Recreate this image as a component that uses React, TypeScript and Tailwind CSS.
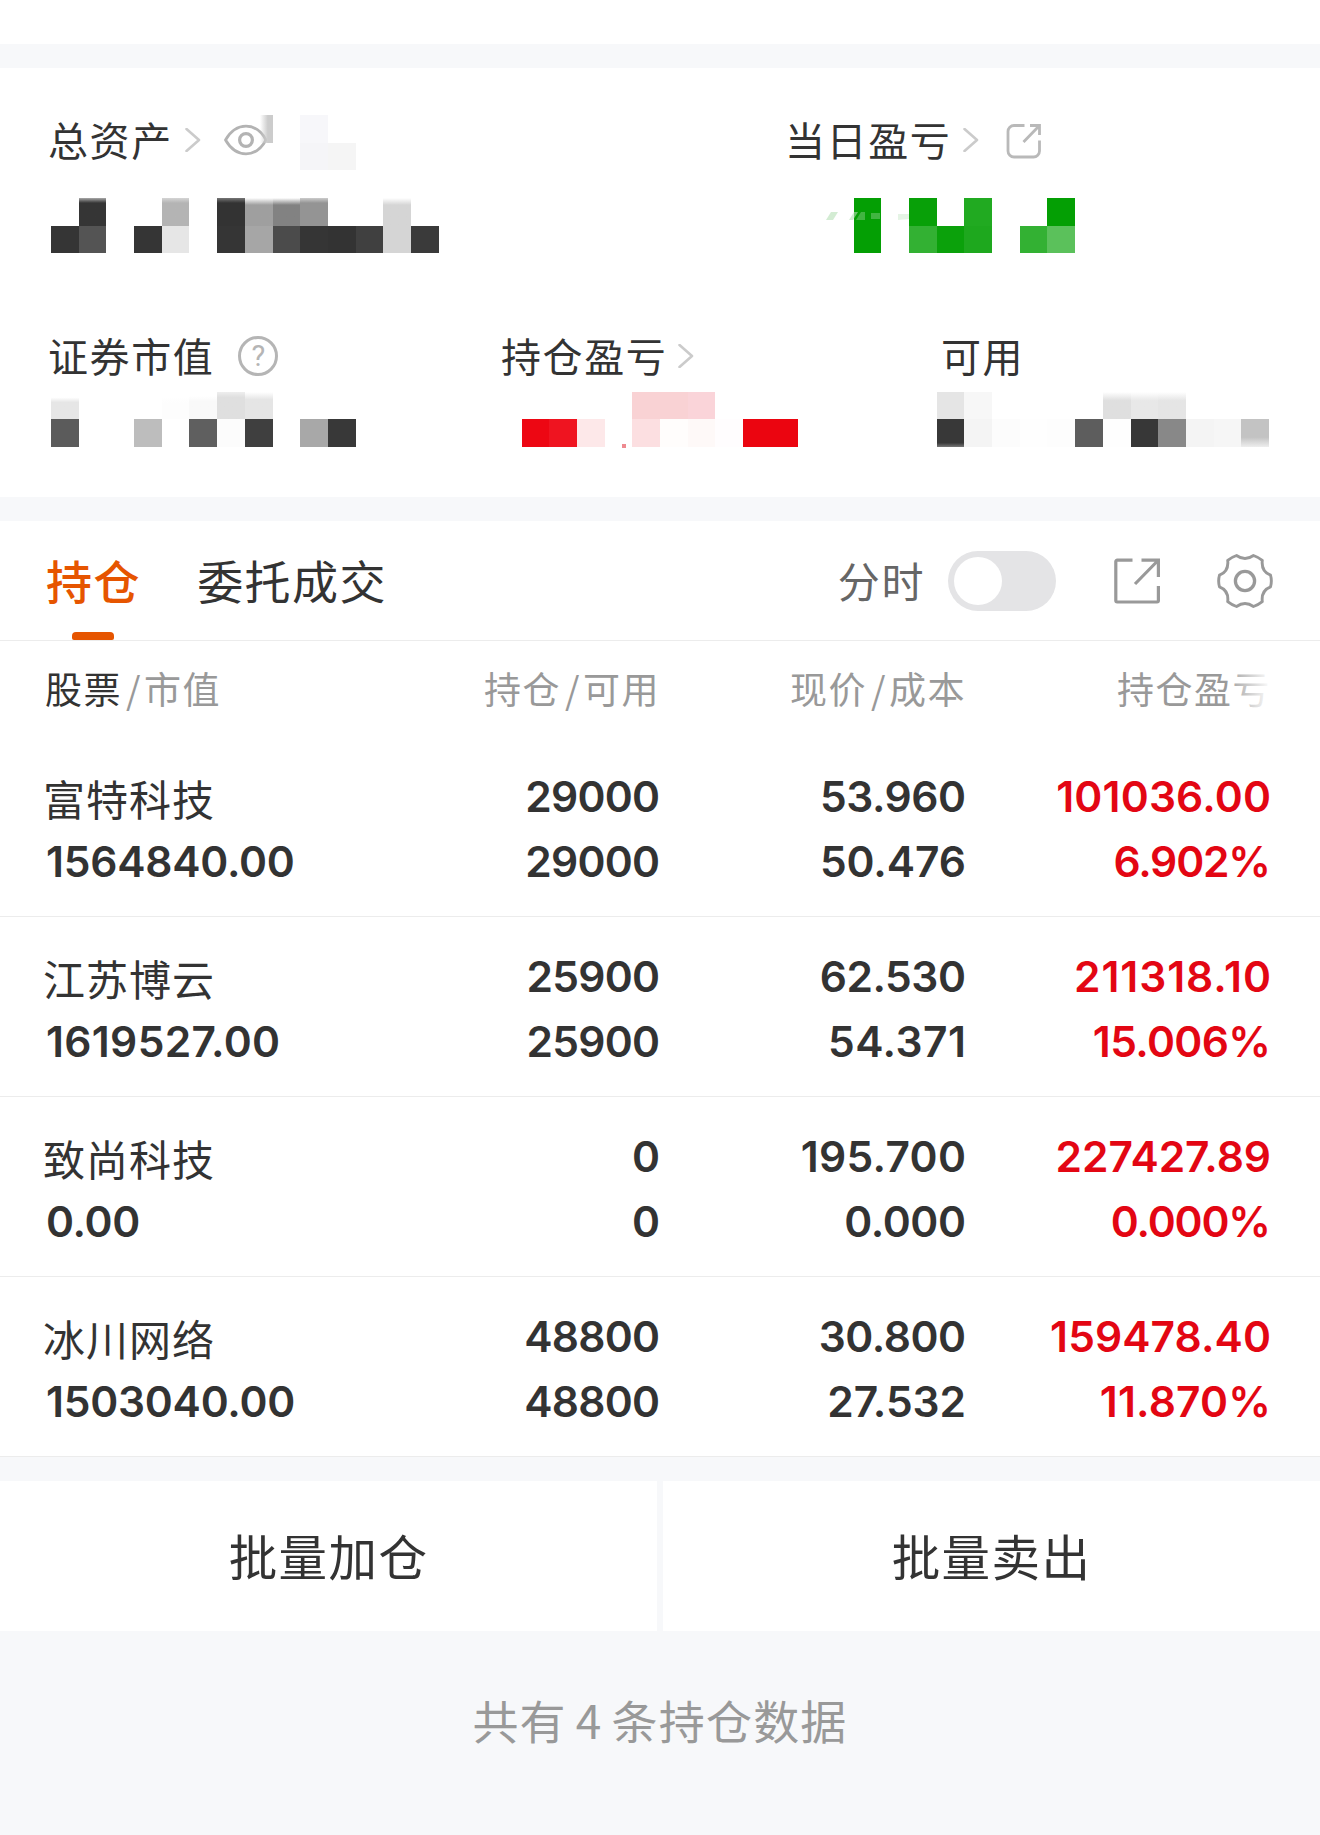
import clsx from "clsx";

const CELL = "h-full w-[27.7px] shrink-0";

function Mosaic({ rows, className }: { rows: string[][]; className?: string }) {
  return (
    <div className={clsx("flex flex-col", className)}>
      {rows.map((row, r) => (
        <div key={r} className="flex h-[27.5px]">
          {row.map((color, c) => (
            <div key={c} className={clsx(CELL, color)} />
          ))}
        </div>
      ))}
    </div>
  );
}

const TOTAL_ASSETS = [
  ["", "bg-linear-to-b from-[#aaa] to-[#353535] to-18%", "", "", "bg-linear-to-b from-[#d5d5d5] to-[#b4b4b4] to-18%", "", "bg-linear-to-b from-[#777] to-[#333] to-18%", "bg-linear-to-b from-white to-[#9f9f9f] to-25%", "bg-linear-to-b from-white to-[#828282] to-25%", "bg-linear-to-b from-[#ccc] to-[#949494] to-18%", "", "", "bg-linear-to-b from-white to-[#d5d5d5] to-25%", ""],
  ["bg-[#353535]", "bg-[#545454]", "", "bg-[#353535]", "bg-[#e6e6e6]", "", "bg-[#353535]", "bg-[#a6a6a6]", "bg-[#4b4b4b]", "bg-[#353535]", "bg-[#333333]", "bg-[#404040]", "bg-[#d5d5d5]", "bg-[#3a3a3a]"],
];

const DAY_PROFIT = [
  ["bg-[#049f04]", "", "bg-[#08a008]", "", "bg-[#21aa21]", "", "", "bg-[#049f04]"],
  ["bg-[#049f04]", "", "bg-[#33b133]", "bg-[#0ba10b]", "bg-[#1ea81e]", "", "bg-[#33b133]", "bg-[#5bc15b]"],
];

const MARKET_VALUE = [
  ["bg-linear-to-b from-white from-20% to-[#e6e6e6] to-38%", "", "", "", "bg-linear-to-b from-white from-20% to-[#fdfdfd] to-40%", "bg-linear-to-b from-white from-15% to-[#f9f9f9] to-35%", "bg-linear-to-b from-[#eee] to-[#dfdfdf] to-20%", "bg-linear-to-b from-white to-[#e5e5e5] to-28%", "", "", ""],
  ["bg-[#5b5b5b]", "", "", "bg-[#bdbdbd]", "", "bg-[#5f5f5f]", "bg-[#fcfcfc]", "bg-[#3f3f3f]", "", "bg-[#a8a8a8]", "bg-[#383838]"],
];

const HOLD_PROFIT = [
  ["", "", "", "", "bg-[#f9d2d4]", "bg-[#f9d2d4]", "bg-[#fad4d9]", "", "", ""],
  ["bg-[#ed0713]", "bg-[#ef1420]", "bg-[#fde8e9]", "", "bg-[#fcdfe1]", "bg-[#fffdfc]", "bg-[#fef9f8]", "bg-[#fffdfe]", "bg-[#eb0510]", "bg-[#eb0510]"],
];

const AVAILABLE = [
  ["bg-[#e5e5e5]", "bg-[#f7f7f7]", "", "", "", "", "bg-linear-to-b from-white to-[#dfdfdf] to-32%", "bg-linear-to-b from-white to-[#e8e8e8] to-32%", "bg-linear-to-b from-white to-[#e5e5e5] to-32%", "", "", ""],
  ["bg-linear-to-b from-[#383838] from-85% to-[#777]", "bg-[#f4f4f4]", "bg-[#fcfcfc]", "bg-[#fefefe]", "bg-[#fdfdfd]", "bg-[#5d5d5d]", "bg-[#fefefe]", "bg-[#373737]", "bg-[#888888]", "bg-[#f4f4f4]", "bg-[#f6f6f6]", "bg-linear-to-b from-[#c3c3c3] from-65% to-[#eee]"],
];

const HOLDINGS = [
  { name: "富特科技", value: "1564840.00", held: "29000", usable: "29000", price: "53.960", cost: "50.476", profit: "101036.00", rate: "6.902%" },
  { name: "江苏博云", value: "1619527.00", held: "25900", usable: "25900", price: "62.530", cost: "54.371", profit: "211318.10", rate: "15.006%" },
  { name: "致尚科技", value: "0.00", held: "0", usable: "0", price: "195.700", cost: "0.000", profit: "227427.89", rate: "0.000%" },
  { name: "冰川网络", value: "1503040.00", held: "48800", usable: "48800", price: "30.800", cost: "27.532", profit: "159478.40", rate: "11.870%" },
];

function Chevron({ className }: { className?: string }) {
  return (
    <svg className={clsx("h-6 w-4 shrink-0", className)} viewBox="0 0 16 24" fill="none" stroke="#cbcbcb" strokeWidth="2.6" strokeLinecap="round" strokeLinejoin="round">
      <path d="M1.5 1l12.5 11L1.5 23" />
    </svg>
  );
}

function Eye() {
  return (
    <svg className="h-8 w-[43px]" viewBox="0 0 43 32" fill="none" stroke="#b3b3b3" strokeWidth="2.8">
      <path d="M1.5 16C7 6.5 14.5 2.2 22 2.2S37 6.5 42 16C37 25.5 29.5 29.8 22 29.8S7 25.5 1.5 16z" strokeLinejoin="round" />
      <circle cx="22" cy="16" r="6.4" strokeWidth="3.2" />
    </svg>
  );
}

function ShareRound() {
  return (
    <svg className="h-9 w-9" viewBox="0 0 36 36" fill="none" stroke="#b9b9b9" strokeWidth="2.8">
      <path d="M18.5 2.5H8A6 6 0 0 0 2 8.5V28A6 6 0 0 0 8 34H27.5A6 6 0 0 0 33.5 28V17.5" />
      <path d="M24 2.5H33.5V12M33 3L17.5 19" />
    </svg>
  );
}

function ShareSquare() {
  return (
    <svg className="h-[46px] w-[46px]" viewBox="0 0 46 46" fill="none" stroke="#999" strokeWidth="3.2">
      <path d="M18.5 2.2H3.2A1.4 1.4 0 0 0 1.8 3.6V42.6A1.4 1.4 0 0 0 3.2 44H43A1.4 1.4 0 0 0 44.4 42.6V28" />
      <path d="M27.5 2.2H44.4V19M43.5 3L21 26" />
    </svg>
  );
}

function Gear() {
  return (
    <svg className="h-[54px] w-[56px]" viewBox="0 0 56 54" fill="none" stroke="#999" strokeWidth="2.9" strokeLinejoin="round">
      <path d="M19.5 1.5Q28 7.5 36.5 1.5Q41.5 3.2 45.3 6.3Q44 17.5 53.5 21.2Q55.2 27 53.5 32.8Q44 36.5 45.3 47.7Q41.5 50.8 36.5 52.5Q28 46.5 19.5 52.5Q14.5 50.8 10.7 47.7Q12 36.5 2.5 32.8Q.8 27 2.5 21.2Q12 17.5 10.7 6.3Q14.5 3.2 19.5 1.5z" />
      <circle cx="28" cy="27" r="9.6" strokeWidth="3.3" />
    </svg>
  );
}

function Label({ children }: { children: string }) {
  return <span className="-mt-[3px] -ml-[1px] text-[40px] leading-[48px] tracking-[1.6px]">{children}</span>;
}

function Summary() {
  return (
    <section className="h-[429px] bg-white pt-[48px]">
      <div className="flex h-[216px]">
        <div className="w-[736px] pl-[49px]">
          <div className="flex h-[48px] items-center">
            <Label>总资产</Label>
            <Chevron className="ml-[12px]" />
            <div className="relative ml-[23px] flex">
              <Eye />
              <div className="absolute -top-[9px] left-[36px] h-[28px] w-[13px] bg-linear-to-r from-transparent to-[#cccccc] to-60%" />
            </div>
            <div className="mt-[5px] ml-[33px] grid h-[55px] w-[56px] shrink-0 grid-cols-2">
              <div className="bg-[#f7f7fa]" />
              <div />
              <div className="bg-[#f5f5f8]" />
              <div className="bg-[#f5f5f5]" />
            </div>
          </div>
          <Mosaic rows={TOTAL_ASSETS} className="mt-[34px] ml-[2px]" />
        </div>
        <div className="pl-[50px]">
          <div className="flex h-[48px] items-center">
            <Label>当日盈亏</Label>
            <Chevron className="ml-[12px]" />
            <div className="mt-[2px] ml-[27px]">
              <ShareRound />
            </div>
          </div>
          <div className="relative mt-[34px] ml-[67.6px]">
            <Mosaic rows={DAY_PROFIT} />
            <svg className="absolute top-[12px] -left-[28px] h-[14px] w-[132px]" viewBox="0 0 132 14" fill="#b5dfb5">
              <path d="M5 2h7l-5 8H0zM28 2h4l-5 8h-4z" opacity=".6" />
              <path d="M35 2h4v8h-9zM45 3h9v6h-9zM72 4h11v5l-11 1z" opacity=".35" />
            </svg>
          </div>
        </div>
      </div>
      <div className="flex">
        <div className="w-[452px] pl-[49px]">
          <div className="flex h-[48px] items-center">
            <Label>证券市值</Label>
            <div className="ml-[24px] flex h-[40px] w-[40px] items-center justify-center rounded-full border-[3px] border-[#b5b5b5] font-[Roboto] text-[29px] leading-none text-[#b5b5b5]">?</div>
          </div>
          <Mosaic rows={MARKET_VALUE} className="mt-[11.9px] ml-[2px]" />
        </div>
        <div className="w-[440px] pl-[50px]">
          <div className="flex h-[48px] items-center">
            <Label>持仓盈亏</Label>
            <Chevron className="ml-[11px]" />
          </div>
          <div className="relative mt-[11.9px] ml-[19.6px]">
            <Mosaic rows={HOLD_PROFIT} />
            <div className="absolute top-[52px] left-[100px] h-[4px] w-[4px] bg-[#ee8a90]" />
          </div>
        </div>
        <div className="pl-[50px]">
          <div className="flex h-[48px] items-center">
            <Label>可用</Label>
          </div>
          <Mosaic rows={AVAILABLE} className="mt-[11.9px] -ml-[5.3px]" />
        </div>
      </div>
    </section>
  );
}

function TabBar() {
  return (
    <div className="flex h-[120px] items-center border-b border-[#ececec] bg-white pr-[47px] pl-[46px]">
      <div className="relative flex h-full items-center">
        <span className="-mt-[3px] text-[46px] leading-[56px] font-medium tracking-[1.6px] text-[#e65500]">持仓</span>
        <div className="absolute bottom-0 left-[26px] h-[8px] w-[42px] rounded-t-[4px] rounded-b-[2px] bg-[#e65500]" />
      </div>
      <span className="-mt-[3px] ml-[56px] text-[46px] leading-[56px] tracking-[1.4px]">委托成交</span>
      <span className="-mt-[1px] ml-auto text-[42px] leading-[56px] tracking-[1.6px] text-[#666]">分时</span>
      <div className="ml-[23px] h-[60px] w-[108px] rounded-full bg-[#e4e4e6] p-[6px]">
        <div className="h-[48px] w-[48px] rounded-full bg-white" />
      </div>
      <div className="ml-[58px]">
        <ShareSquare />
      </div>
      <div className="mt-[1px] ml-[57px]">
        <Gear />
      </div>
    </div>
  );
}

const COLUMNS = "grid grid-cols-[315px_300px_306px_305px] pl-[45px]";

function Slash() {
  return <span className="mr-[2px] ml-[4px]">/</span>;
}

function TableHead() {
  return (
    <div className={clsx(COLUMNS, "h-[96px] bg-white pt-[21px] text-[37px] leading-[52px] tracking-[1.5px] text-[#999]")}>
      <div>
        <span className="text-[#333]">股票</span>
        <Slash />
        市值
      </div>
      <div className="text-right">
        持仓
        <Slash />
        可用
      </div>
      <div className="text-right">
        现价
        <Slash />
        成本
      </div>
      <div className="relative text-right">
        持仓盈亏
        <div className="absolute top-0 right-0 h-full w-[46px] bg-linear-to-r from-transparent to-white" />
      </div>
    </div>
  );
}

// Width corrections for the digits and signs that Inter sets too narrow or too wide
const ADVANCE: Record<string, number> = { "1": 2.6, "7": 1.6, ".": 1, "%": -5 };

function trackingOf(text: string) {
  const sum = [...text].reduce((acc, ch) => acc + (ADVANCE[ch] ?? -0.75), 0);
  return sum / text.length;
}

function Num({ children }: { children: string }) {
  const tracking = trackingOf(children);
  return (
    <div className="font-[Inter] text-[42.5px] leading-[65px] font-semibold" style={{ letterSpacing: tracking, marginRight: -tracking }}>
      {children}
    </div>
  );
}

function NumberPair({ top, bottom, className }: { top: string; bottom: string; className?: string }) {
  return (
    <div className={clsx("text-right", className)}>
      <Num>{top}</Num>
      <Num>{bottom}</Num>
    </div>
  );
}

function Holdings() {
  return (
    <div className="bg-white">
      {HOLDINGS.map((h) => (
        <div key={h.name} className={clsx(COLUMNS, "h-[180px] border-b border-[#ececec] pt-[27px]")}>
          <div>
            <div className="-mt-[2px] -ml-[2px] h-[67px] pt-[3px] text-[42px] leading-[65px] tracking-[1px]">{h.name}</div>
            <div className="pl-[1px]">
              <Num>{h.value}</Num>
            </div>
          </div>
          <NumberPair top={h.held} bottom={h.usable} />
          <NumberPair top={h.price} bottom={h.cost} />
          <NumberPair top={h.profit} bottom={h.rate} className="text-[#e30613]" />
        </div>
      ))}
    </div>
  );
}

export default function App() {
  return (
    <div className="h-[1835px] w-[1320px] overflow-hidden bg-[#f7f8fa] font-['Noto_Sans_CJK_SC',sans-serif] text-[#333]">
      <div className="h-[44px] bg-white" />
      <div className="h-[24px]" />
      <Summary />
      <div className="h-[24px]" />
      <TabBar />
      <TableHead />
      <Holdings />
      <div className="mt-[24px] grid h-[150px] grid-cols-2 gap-[6px] text-[48.5px] tracking-[1.4px]">
        <button className="bg-white pb-[1px]">批量加仓</button>
        <button className="bg-white pb-[1px]">批量卖出</button>
      </div>
      <div className="pt-[55px] text-center text-[46px] leading-[66px] tracking-[1.2px] text-[#999] [word-spacing:-2.5px]">共有 4 条持仓数据</div>
    </div>
  );
}
